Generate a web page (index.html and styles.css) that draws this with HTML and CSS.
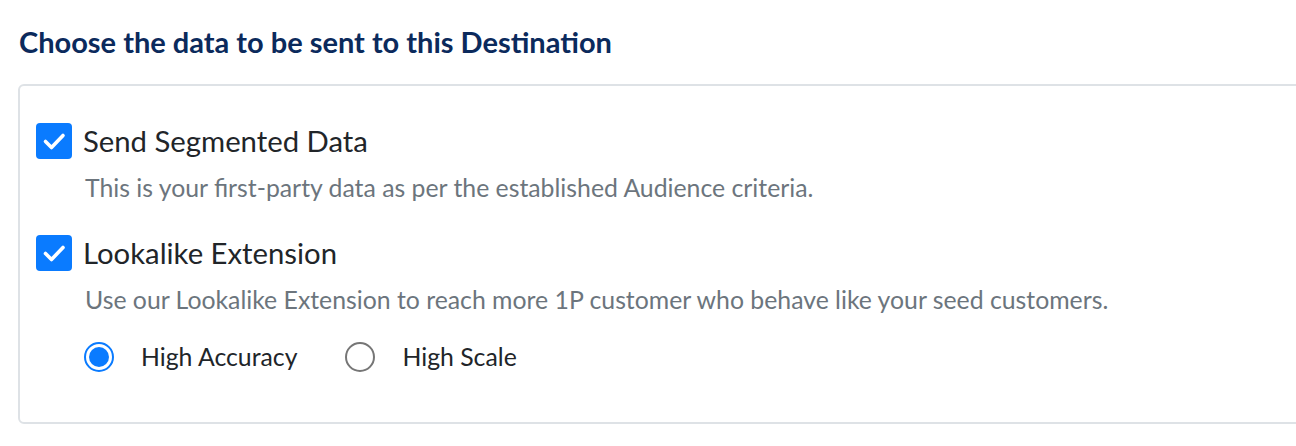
FILE: index.html
```html
<!DOCTYPE html>
<html>
<head>
<meta charset="utf-8">
<link rel="stylesheet" href="styles.css">
</head>
<body>
<h2 class="title">Choose the data to be sent to this Destination</h2>
<div class="card">
  <div class="option">
    <div class="row">
      <span class="checkbox"><svg viewBox="0 0 36 36" width="36" height="36"><path d="M9.5 18.5 L15.5 24.5 L27 12.5" fill="none" stroke="#fff" stroke-width="3.6" stroke-linecap="round" stroke-linejoin="round"/></svg></span>
      <span class="label">Send Segmented Data</span>
    </div>
    <p class="desc">This is your first-party data as per the established Audience criteria.</p>
  </div>
  <div class="option">
    <div class="row">
      <span class="checkbox"><svg viewBox="0 0 36 36" width="36" height="36"><path d="M9.5 18.5 L15.5 24.5 L27 12.5" fill="none" stroke="#fff" stroke-width="3.6" stroke-linecap="round" stroke-linejoin="round"/></svg></span>
      <span class="label">Lookalike Extension</span>
    </div>
    <p class="desc">Use our Lookalike Extension to reach more 1P customer who behave like your seed customers.</p>
    <div class="radios">
      <label class="radio-item"><span class="radio checked"></span><span class="radio-label">High Accuracy</span></label>
      <label class="radio-item"><span class="radio"></span><span class="radio-label">High Scale</span></label>
    </div>
  </div>
</div>
</body>
</html>
```
FILE: styles.css
```css
html, body {
  margin: 0;
  padding: 0;
  background: #fff;
  font-family: "Lato", "Noto Sans", sans-serif;
  overflow: hidden;
}
.title {
  margin: 0;
  padding: 27px 0 0 19px;
  height: 55px;
  box-sizing: border-box;
  font-size: 29px;
  line-height: 30px;
  font-weight: 700;
  color: #0b2a5c;
}
.card {
  margin-top: 29px;
  margin-left: 18px;
  width: 1320px;
  height: 340px;
  box-sizing: border-box;
  border: 2px solid #dee2e6;
  border-radius: 6px;
  padding: 37px 16px 0 16px;
}
.option + .option {
  margin-top: 33px;
}
.row {
  display: flex;
  align-items: center;
  gap: 11px;
  height: 36px;
}
.checkbox {
  width: 36px;
  height: 36px;
  border-radius: 4px;
  background: #0a7bff;
  display: block;
  flex: none;
}
.checkbox svg {
  display: block;
}
.label {
  font-size: 29.3px;
  line-height: 36px;
  color: #212529;
}
.desc {
  margin: 15px 0 0 49px;
  font-size: 24.8px;
  line-height: 28px;
  color: #6c757d;
}
.radios {
  display: flex;
  align-items: center;
  margin: 27px 0 0 48px;
  gap: 48px;
}
.radio-item {
  display: flex;
  align-items: center;
  gap: 27px;
}
.radio {
  width: 30px;
  height: 30px;
  box-sizing: border-box;
  border-radius: 50%;
  border: 2px solid #767676;
  display: flex;
  align-items: center;
  justify-content: center;
  flex: none;
}
.radio.checked {
  border-color: #0a7bff;
}
.radio.checked::after {
  content: "";
  width: 20px;
  height: 20px;
  border-radius: 50%;
  background: #0a7bff;
}
.radio-label {
  font-size: 24.8px;
  line-height: 32px;
  color: #212529;
}
```
